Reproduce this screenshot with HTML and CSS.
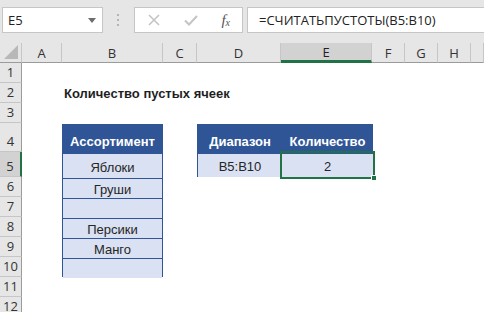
FILE: index.html
```html
<!DOCTYPE html>
<html lang="ru">
<head>
  <meta charset="UTF-8" />
  <title>СЧИТАТЬПУСТОТЫ</title>
  <link rel="stylesheet" href="styles.css">
</head>
<body>
  <div class="toolbar">
    <div class="namebox">
      <span>E5</span>
      <svg class="caret" width="8" height="5" viewBox="0 0 8 5"><path d="M0 0h8L4 5z" fill="#6d6d6d"/></svg>
    </div>
    <div class="grip">
      <svg width="3" height="12" viewBox="0 0 3 12"><rect x="0" y="0" width="2" height="2" fill="#b4b4b4"/><rect x="0" y="5" width="2" height="2" fill="#b4b4b4"/><rect x="0" y="10" width="2" height="2" fill="#b4b4b4"/></svg>
    </div>
    <div class="fxbox">
      <svg width="12" height="12" viewBox="0 0 12 12"><path d="M1 1l10 10M11 1L1 11" stroke="#c4c4c4" stroke-width="1.6" fill="none"/></svg>
      <svg width="14" height="11" viewBox="0 0 14 11"><path d="M1 5.5l4 4L13 1" stroke="#c4c4c4" stroke-width="2" fill="none"/></svg>
      <span class="fx">f<sub>x</sub></span>
    </div>
    <div class="formula">=СЧИТАТЬПУСТОТЫ(B5:B10)</div>
  </div>

  <div class="sheet">
    <div class="corner"><svg width="14" height="14" viewBox="0 0 14 14"><path d="M14 0v14H0z" fill="#b8b8b8"/></svg></div>
    <div class="colhead">A</div>
    <div class="colhead">B</div>
    <div class="colhead">C</div>
    <div class="colhead">D</div>
    <div class="colhead active">E</div>
    <div class="colhead">F</div>
    <div class="colhead">G</div>
    <div class="colhead">H</div>
    <div class="colhead"></div>

    <div class="rowhead r1">1</div>
    <div class="rowhead r2">2</div>
    <div class="rowhead r3">3</div>
    <div class="rowhead r4">4</div>
    <div class="rowhead r5 active">5</div>
    <div class="rowhead r6">6</div>
    <div class="rowhead r7">7</div>
    <div class="rowhead r8">8</div>
    <div class="rowhead r9">9</div>
    <div class="rowhead r10">10</div>
    <div class="rowhead r11">11</div>
    <div class="rowhead r12">12</div>

    <div class="title">Количество пустых ячеек</div>

    <div class="list">
      <div class="cell head tall">Ассортимент</div>
      <div class="cell mid">Яблоки</div>
      <div class="cell">Груши</div>
      <div class="cell"></div>
      <div class="cell">Персики</div>
      <div class="cell">Манго</div>
      <div class="cell"></div>
    </div>

    <div class="result">
      <div class="cell head tall">Диапазон</div>
      <div class="cell head tall">Количество</div>
      <div class="cell mid">B5:B10</div>
      <div class="cell mid selected">2<span class="handle"></span></div>
    </div>
  </div>
</body>
</html>
```

FILE: styles.css
```css
* {
  margin: 0;
  padding: 0;
  box-sizing: border-box;
}

body {
  width: 484px;
  height: 312px;
  overflow: hidden;
  background: #ffffff;
  font-family: 'Open Sans', 'Noto Sans', sans-serif;
}

.toolbar {
  display: flex;
  align-items: flex-start;
  height: 43px;
  padding: 7px 0 0 2px;
  background: #e6e6e6;
  gap: 0;
}

.namebox,
.fxbox,
.formula {
  height: 26px;
  background: #ffffff;
  border: 1px solid #c6c6c6;
  display: flex;
  align-items: center;
}

.namebox {
  width: 101px;
  padding: 0 6px 0 5px;
  justify-content: space-between;
  font-size: 13px;
  color: #222;
}

.grip {
  width: 31px;
  height: 26px;
  display: flex;
  align-items: center;
  justify-content: center;
}

.fxbox {
  width: 109px;
  padding: 0 12px 0 13px;
  justify-content: space-between;
}

.fx {
  font-family: 'Liberation Serif', serif;
  font-style: italic;
  font-size: 15px;
  color: #555;
  line-height: 1;
}

.fx sub {
  font-size: 10px;
  vertical-align: -1px;
}

.formula {
  flex: 1;
  margin-left: 4px;
  padding-left: 11px;
  font-size: 13px;
  color: #222;
  border-right: none;
}

.sheet {
  display: grid;
  grid-template-columns: 22px 40px 101px 34px 84px 91px 33px 33px 33px 1fr;
  grid-template-rows: 20px 20px 20px 20px 29px 25px repeat(7, 20px);
  font-size: 13px;
}

.corner {
  background: #e6e6e6;
  border-bottom: 1px solid #9b9b9b;
  border-right: 1px solid #c6c6c6;
  display: flex;
  align-items: flex-end;
  justify-content: flex-end;
  padding: 0 3px 3px 0;
}

.colhead {
  background: #e6e6e6;
  border-right: 1px solid #c6c6c6;
  border-bottom: 1px solid #9b9b9b;
  display: flex;
  align-items: center;
  justify-content: center;
  color: #333;
  font-family: 'Open Sans', sans-serif;
  font-size: 13px;
}

.colhead.active {
  background: #d2d2d2;
  border-bottom: 3px solid #217346;
  color: #222;
}

.rowhead {
  grid-column: 1;
  background: #e6e6e6;
  border-bottom: 1px solid #c6c6c6;
  border-right: 1px solid #9b9b9b;
  display: flex;
  align-items: flex-end;
  justify-content: center;
  padding-bottom: 1px;
  color: #333;
  font-size: 13px;
}

.rowhead.active {
  background: #d2d2d2;
  border-right: 2px solid #217346;
}

.r1 { grid-row: 2; }
.r2 { grid-row: 3; }
.r3 { grid-row: 4; }
.r4 { grid-row: 5; }
.r5 { grid-row: 6; }
.r6 { grid-row: 7; }
.r7 { grid-row: 8; }
.r8 { grid-row: 9; }
.r9 { grid-row: 10; }
.r10 { grid-row: 11; }
.r11 { grid-row: 12; }
.r12 { grid-row: 13; }

.title {
  grid-row: 3;
  grid-column: 3 / 8;
  display: flex;
  align-items: flex-end;
  padding: 0 0 2px 2px;
  font-family: 'Liberation Sans', sans-serif;
  font-weight: bold;
  font-size: 13px;
  color: #1f1f1f;
}

.list {
  grid-row: 5 / 12;
  grid-column: 3;
  display: grid;
  grid-template-rows: 29px 25px repeat(5, 20px);
  border: 1px solid #2f5597;
  border-top: none;
  margin-top: 1px;
}

.result {
  grid-row: 5 / 7;
  grid-column: 5 / 7;
  display: grid;
  grid-template-columns: 84px 91px;
  grid-template-rows: 29px 24px;
  border: 1px solid #2f5597;
  border-top: none;
  margin-top: 1px;
}

.cell {
  display: flex;
  align-items: flex-end;
  justify-content: center;
  padding-bottom: 1px;
  background: #d9e1f2;
  border-top: 1px solid #2f5597;
  font-family: 'Liberation Sans', sans-serif;
  font-size: 13px;
  color: #262626;
}

.cell.head {
  background: #2f5597;
  color: #ffffff;
  font-weight: bold;
  padding-bottom: 4px;
}

.cell.mid {
  padding-bottom: 3px;
}

.selected {
  position: relative;
}

.selected::after {
  content: '';
  position: absolute;
  left: -2px;
  top: -3px;
  right: -2px;
  bottom: -2px;
  border: 2px solid #217346;
}

.handle {
  position: absolute;
  right: -4px;
  bottom: -4px;
  width: 6px;
  height: 6px;
  background: #217346;
  border: 1px solid #ffffff;
  z-index: 2;
}
```
